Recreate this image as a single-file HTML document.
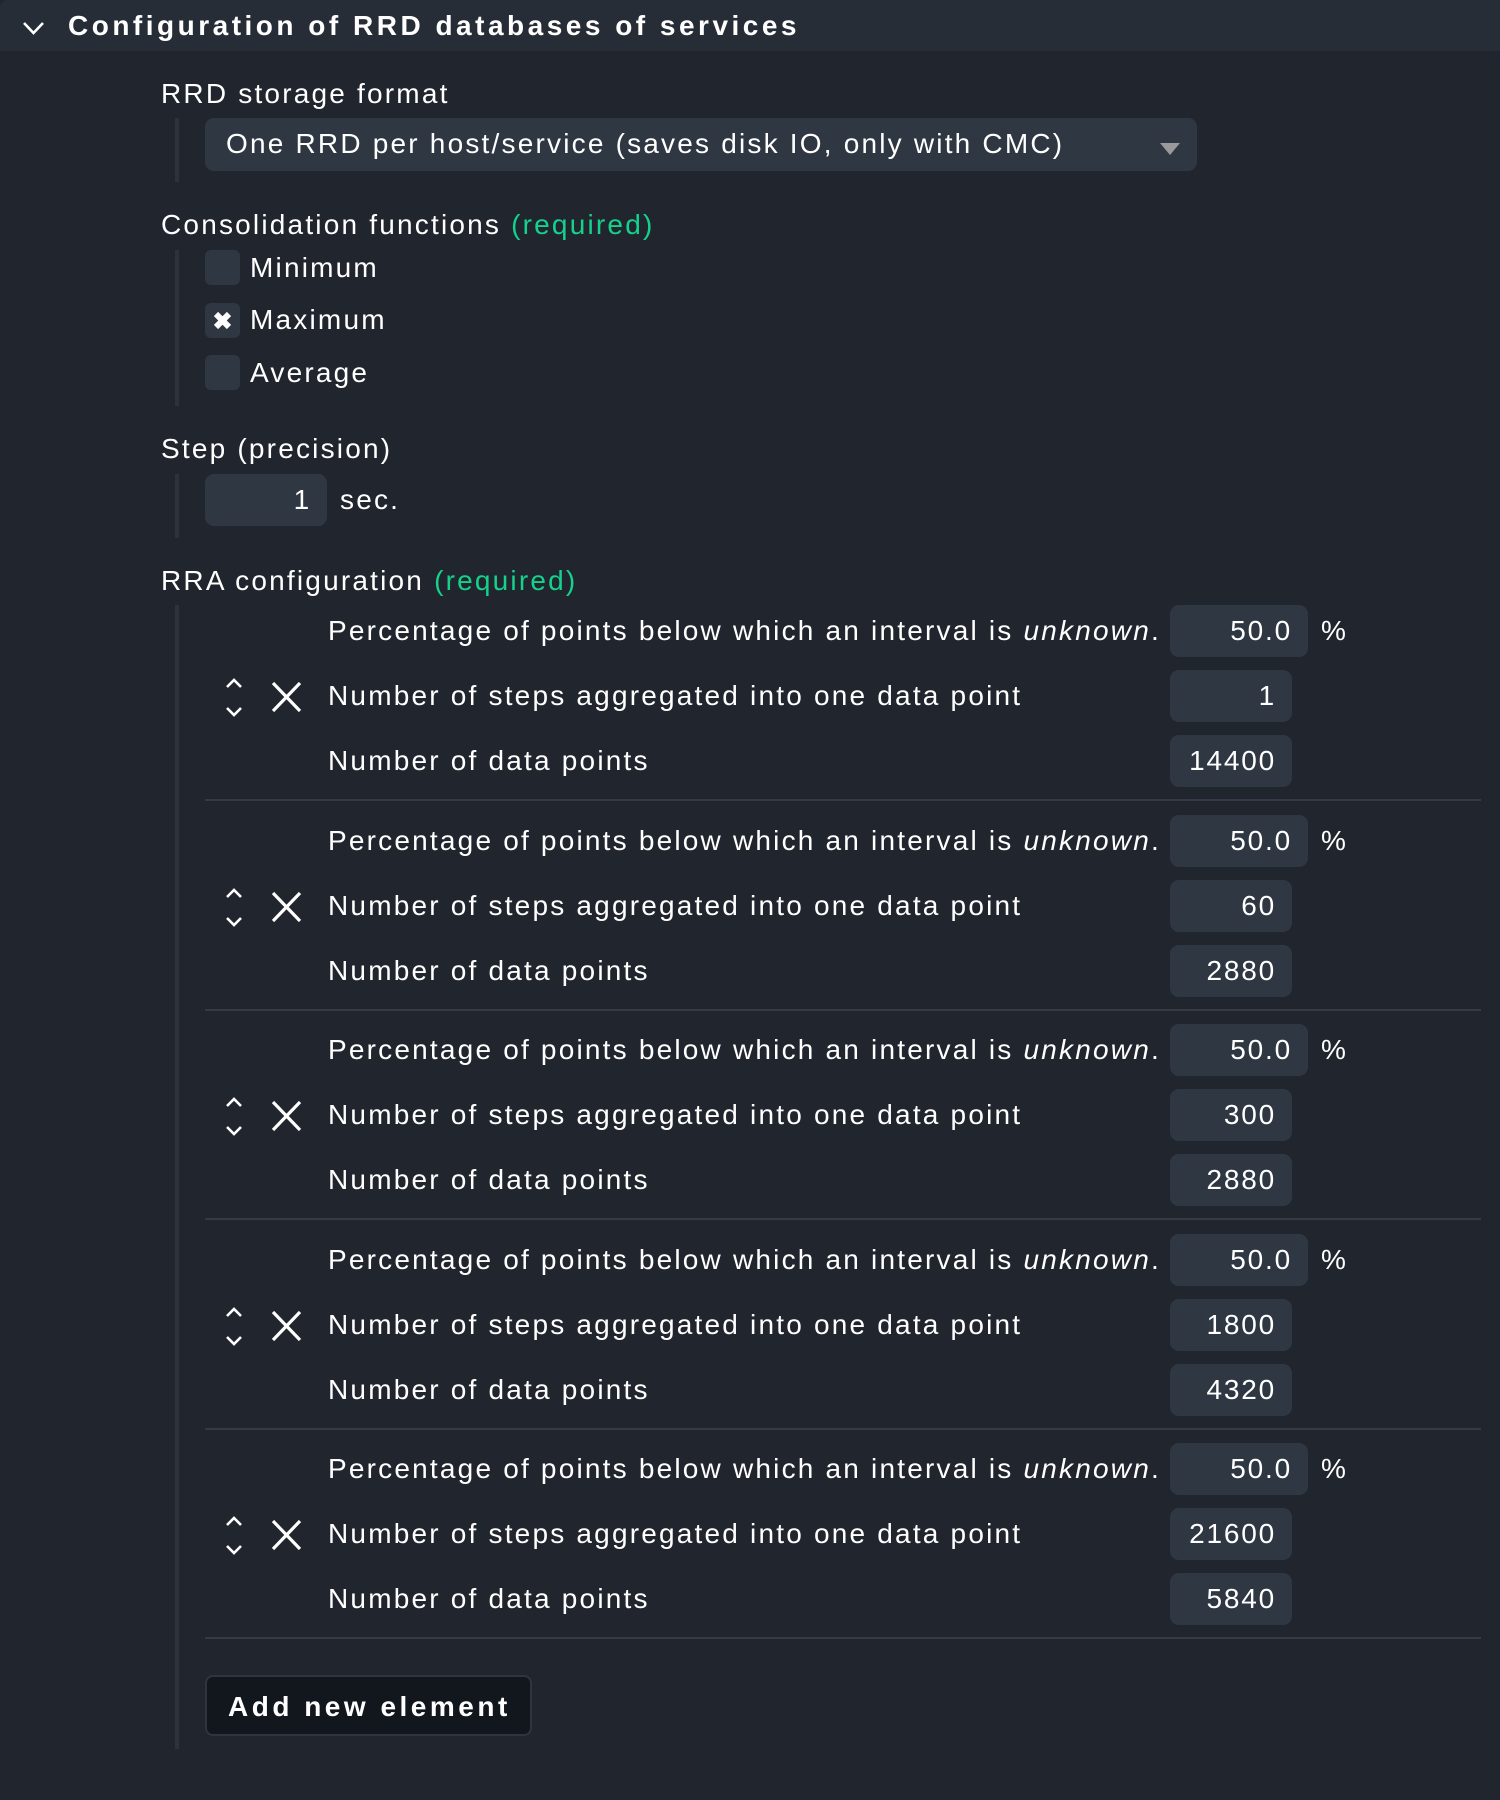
<!DOCTYPE html>
<html><head><meta charset="utf-8"><style>
*{margin:0;padding:0;box-sizing:border-box}
body{width:1500px;height:1800px;background:#21262e;font-family:"Liberation Sans",sans-serif;color:#fff;position:relative;overflow:hidden}
.a{position:absolute}
.t{position:absolute;font-size:28px;letter-spacing:2.2px;line-height:40px;white-space:nowrap}
.g{color:#15d18c}
.bar{position:absolute;left:175px;width:4px;background:#2d333d}
.in{position:absolute;background:#2f3743;border-radius:9px;font-size:28px;letter-spacing:1.8px;text-align:right;padding-right:16px;line-height:52px;height:52px}
.cb{position:absolute;left:205px;width:35px;height:35px;background:#2f3743;border-radius:6px}
.sep{position:absolute;left:205px;width:1276px;height:2px;background:#343b46}
</style></head><body>
<div class="a" style="left:0;top:0;width:1500px;height:51px;background:#272d36;border-top-left-radius:8px"></div>
<svg class="a" style="left:22px;top:21px" width="23" height="15"><path d="M2 2 L11.5 12 L21 2" stroke="#fff" stroke-width="2.6" fill="none"/></svg>
<div class="t" style="left:68px;top:6px;font-weight:bold;letter-spacing:3.5px">Configuration of RRD databases of services</div>

<div class="t" style="left:161px;top:74px">RRD storage format</div>
<div class="bar" style="top:118px;height:64px"></div>
<div class="a" style="left:205px;top:118px;width:992px;height:53px;background:#2f3743;border-radius:9px"></div>
<div class="t" style="left:226px;top:124px">One RRD per host/service (saves disk IO, only with CMC)</div>
<svg class="a" style="left:1160px;top:143px" width="20" height="12"><path d="M0 0H20L10 12Z" fill="#9a9a9a"/></svg>

<div class="t" style="left:161px;top:205px">Consolidation functions <span class="g">(required)</span></div>
<div class="bar" style="top:250px;height:156px"></div>
<div class="cb" style="top:250px"></div><div class="t" style="left:250px;top:248px">Minimum</div>
<div class="cb" style="top:303px"></div>
<svg class="a" style="left:211px;top:309px" width="23" height="23"><path d="M5 5L18 18M18 5L5 18" stroke="#fff" stroke-width="6" stroke-linecap="butt"/></svg>
<div class="t" style="left:250px;top:300px">Maximum</div>
<div class="cb" style="top:355px"></div><div class="t" style="left:250px;top:353px">Average</div>

<div class="t" style="left:161px;top:429px">Step (precision)</div>
<div class="bar" style="top:474px;height:64px"></div>
<div class="in" style="left:205px;top:474px;width:122px">1</div>
<div class="t" style="left:340px;top:480px">sec.</div>

<div class="t" style="left:161px;top:561px">RRA configuration <span class="g">(required)</span></div>
<div class="bar" style="top:605px;height:1144px"></div>

<div id="rows"></div>
<script>
var vals=[["1","14400"],["60","2880"],["300","2880"],["1800","4320"],["21600","5840"]];
var h="";
for(var i=0;i<5;i++){
 var y=605+i*209.5;
 h+='<div class="in" style="left:1170px;top:'+y+'px;width:138px">50.0</div>';
 h+='<div class="t" style="left:1321px;top:'+(y+6)+'px">%</div>';
 h+='<div class="t" style="left:328px;top:'+(y+6)+'px">Percentage of points below which an interval is <i>unknown</i>.</div>';
 h+='<div class="in" style="left:1170px;top:'+(y+65)+'px;width:122px">'+vals[i][0]+'</div>';
 h+='<div class="t" style="left:328px;top:'+(y+71)+'px">Number of steps aggregated into one data point</div>';
 h+='<svg class="a" style="left:224px;top:'+(y+72)+'px" width="20" height="40"><path d="M3 10L10 3L17 10M3 31L10 38L17 31" stroke="#fff" stroke-width="2.6" fill="none"/></svg>';
 h+='<svg class="a" style="left:270px;top:'+(y+76)+'px" width="33" height="32"><path d="M3 2L30 30M30 2L3 30" stroke="#fff" stroke-width="3.2" fill="none"/></svg>';
 h+='<div class="in" style="left:1170px;top:'+(y+130)+'px;width:122px">'+vals[i][1]+'</div>';
 h+='<div class="t" style="left:328px;top:'+(y+136)+'px">Number of data points</div>';
 h+='<div class="sep" style="top:'+(y+194)+'px"></div>';
}
document.getElementById("rows").innerHTML=h;
</script>
<div class="a" style="left:205px;top:1675px;width:327px;height:61px;background:#12171d;border:2px solid #2f3540;border-radius:8px"></div>
<div class="t" style="left:228px;top:1687px;font-weight:bold;letter-spacing:3.5px">Add new element</div>
</body></html>
